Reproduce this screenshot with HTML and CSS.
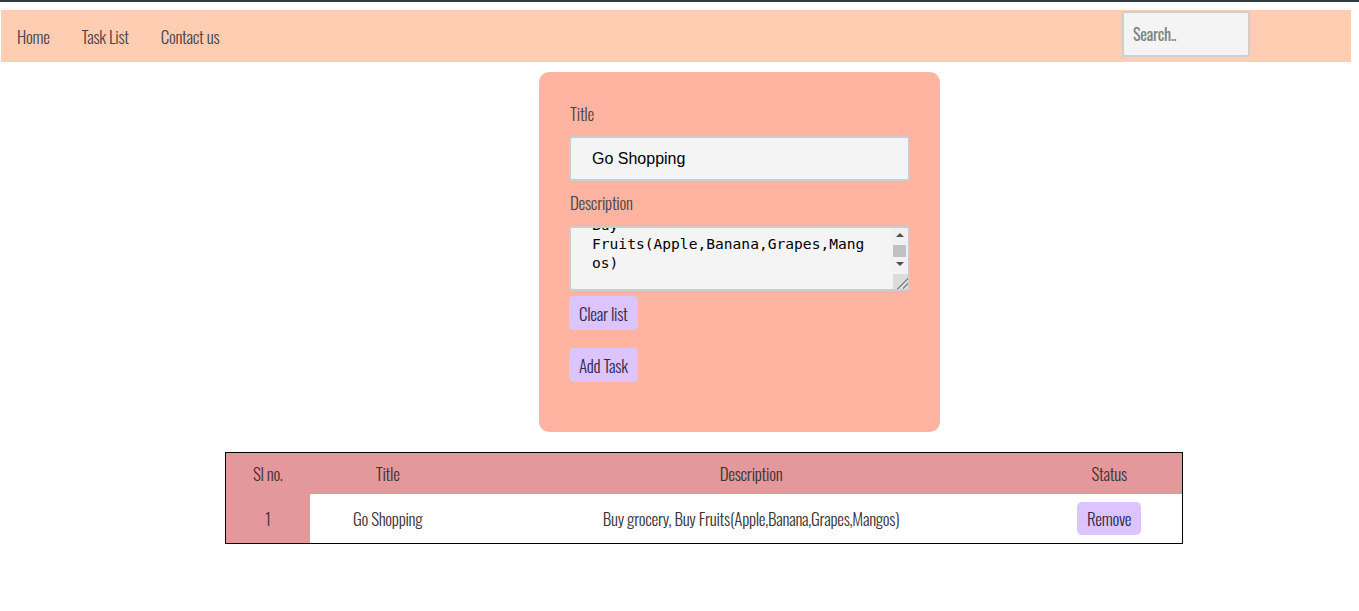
FILE: index.html
```html
<!DOCTYPE html>
<html lang="en">
<head>
<meta charset="utf-8">
<title>Task List</title>
<link rel="stylesheet" href="styles.css">
</head>
<body>
<div class="topline"></div>
<nav class="navbar">
  <a class="nav-link" href="#">Home</a>
  <a class="nav-link" href="#">Task List</a>
  <a class="nav-link" href="#">Contact us</a>
  <input class="search" type="text" placeholder="Search..">
</nav>
<main class="content">
  <section class="card">
    <label class="label" for="title">Title</label>
    <input class="field" id="title" type="text" value="Go Shopping">
    <label class="label label-desc" for="desc">Description</label>
    <div class="area-wrap">
      <textarea class="area" id="desc" spellcheck="false">Buy grocery,
Buy Fruits(Apple,Banana,Grapes,Mangos)</textarea>
      <div class="fake-scrollbar" aria-hidden="true">
        <span class="sb-btn sb-up"></span>
        <span class="sb-thumb"></span>
        <span class="sb-btn sb-down"></span>
      </div>
    </div>
    <button class="btn" type="button">Clear list</button>
    <button class="btn btn-add" type="button">Add Task</button>
  </section>
  <table class="tasks">
    <thead>
      <tr>
        <th class="c-no">Sl no.</th>
        <th class="c-title">Title</th>
        <th class="c-desc">Description</th>
        <th class="c-status">Status</th>
      </tr>
    </thead>
    <tbody>
      <tr>
        <td class="c-no">1</td>
        <td class="c-title">Go Shopping</td>
        <td class="c-desc">Buy grocery, Buy Fruits(Apple,Banana,Grapes,Mangos)</td>
        <td class="c-status"><button class="btn btn-remove" type="button">Remove</button></td>
      </tr>
    </tbody>
  </table>
</main>
<script src="script.js"></script>
</body>
</html>
```

FILE: styles.css
```css
* { box-sizing: border-box; }

body {
  margin: 0;
  background: #ffffff;
  font-family: "Oswald", "Liberation Sans Narrow", "DejaVu Sans Condensed", "Liberation Sans", sans-serif;
  font-weight: 300;
  font-size: 17px;
  letter-spacing: -0.3px;
  color: #4a4446;
}

.topline {
  height: 2px;
  background: #2f3a3f;
}

.navbar {
  display: flex;
  align-items: center;
  width: 1350px;
  height: 52px;
  margin: 8px 0 0 1px;
  padding: 0 0 0 16px;
  background: #ffcdb2;
}

.nav-link {
  margin-right: 32px;
  font-size: 17px;
  color: #4a4446;
  text-decoration: none;
}

.search {
  align-self: flex-start;
  margin: 1px 101px 0 auto;
  width: 128px;
  height: 46px;
  padding: 0 9px;
  font-family: inherit;
  font-size: 16px;
  letter-spacing: -0.3px;
  color: #555;
  background: #f4f4f4;
  border: 2px solid #cfcfcf;
  border-radius: 3px;
}

.search::placeholder { color: #808080; }

.content {
  padding-top: 10px;
}

.card {
  width: 401px;
  height: 360px;
  margin-left: 539px;
  padding: 30px 30px 0 30px;
  background: #ffb4a2;
  border-radius: 10px;
}

.label {
  display: block;
  height: 24px;
  line-height: 24px;
  margin-bottom: 10px;
  padding-left: 1px;
}

.label-desc {
  margin-top: 10px;
  margin-bottom: 11px;
}

.field {
  display: block;
  width: 341px;
  height: 45px;
  padding: 0 21px;
  font-family: "Liberation Sans", Arial, sans-serif;
  font-size: 16px;
  letter-spacing: 0;
  color: #000;
  background: #f4f4f4;
  border: 2px solid #cccccc;
  border-radius: 3px;
}

.area-wrap {
  position: relative;
  width: 341px;
  height: 65px;
  margin-bottom: 5px;
}

.area {
  display: block;
  width: 341px;
  height: 65px;
  padding: 12px 37px 20px 21px;
  font-family: "DejaVu Sans Mono", "Liberation Mono", monospace;
  font-size: 14.6px;
  letter-spacing: 0;
  line-height: 19px;
  color: #000;
  background: #f4f4f4;
  border: 2px solid #cccccc;
  border-radius: 3px;
}

.area::-webkit-resizer {
  background-color: #dcdcdc;
  background-image: linear-gradient(135deg, transparent 62%, #8a8a8a 62%, #8a8a8a 67%, transparent 67%, transparent 80%, #8a8a8a 80%, #8a8a8a 85%, transparent 85%);
}

.fake-scrollbar {
  position: absolute;
  top: 2px;
  right: 2px;
  width: 17px;
  height: 44px;
  display: flex;
  flex-direction: column;
  align-items: center;
  background: #f1f1f1;
  pointer-events: none;
}

.sb-btn {
  display: flex;
  align-items: center;
  justify-content: center;
  width: 17px;
  height: 14px;
}

.sb-up::before {
  content: "";
  border-left: 4px solid transparent;
  border-right: 4px solid transparent;
  border-bottom: 4px solid #505050;
}

.sb-down::before {
  content: "";
  border-left: 4px solid transparent;
  border-right: 4px solid transparent;
  border-top: 4px solid #505050;
}

.sb-thumb {
  width: 13px;
  height: 12px;
  margin-top: 3px;
  background: #c1c1c1;
}

.btn {
  display: block;
  height: 34px;
  padding: 0 10px;
  font-family: inherit;
  font-weight: 300;
  font-size: 17px;
  letter-spacing: -0.3px;
  color: #2e2a4a;
  background: #dbc4ff;
  border: none;
  border-radius: 5px;
}

.btn-add {
  margin-top: 18px;
}

.tasks {
  width: 958px;
  margin: 20px 0 0 225px;
  border: 1px solid #000;
  border-collapse: collapse;
  color: #3a3436;
}

.tasks th {
  height: 41px;
  font-weight: 300;
  background: #e5989b;
  text-align: center;
}

.tasks td {
  height: 50px;
  text-align: center;
  background: #ffffff;
}

.tasks td.c-no { background: #e5989b; }

.c-no { width: 84px; }
.c-title { width: 156px; }
.c-desc { width: 570px; }
.c-status { width: 146px; }

.btn-remove {
  display: inline-block;
  vertical-align: middle;
  height: 33px;
}
```

FILE: script.js
```js
document.getElementById('desc').scrollTop = 44;
```
